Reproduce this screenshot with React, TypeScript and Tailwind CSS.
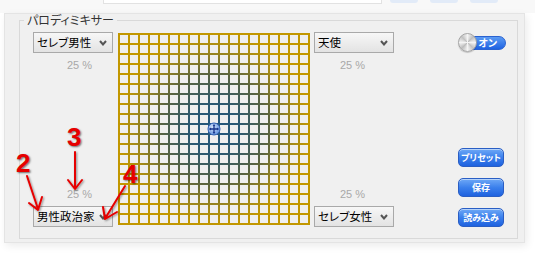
import React from "react";

const jp = "font-['Noto_Sans_CJK_JP',sans-serif] [font-feature-settings:'palt']";

const Chevron = () => (
  <svg width="8" height="6" viewBox="0 0 8 6">
    <path d="M1 1 L4 4.5 L7 1" fill="none" stroke="#555" strokeWidth="2" />
  </svg>
);

const Select = ({ label }: { label: string }) => (
  <div className={`flex h-[21px] w-[80px] items-center justify-between whitespace-nowrap border border-[#a9a9a9] bg-gradient-to-b from-[#f7f7f7] to-[#e3e3e3] pl-[3px] pr-[5px] text-[11.5px] leading-none text-black ${jp}`}>
    <span>{label}</span>
    <Chevron />
  </div>
);

const Pct = ({ className }: { className: string }) => (
  <div className={`font-['Liberation_Sans',sans-serif] text-[11px] leading-[13px] text-[#a8a8a8] ${className}`}>25 %</div>
);

const BlueButton = ({ label }: { label: string }) => (
  <button className={`flex h-[19px] w-[46px] items-center justify-center whitespace-nowrap rounded-[5px] border border-[#2a5ec4] bg-gradient-to-b from-[#6ea8f6] via-[#3b80ec] to-[#1f62df] px-0 text-[9px] font-bold leading-none text-white shadow-[inset_0_1px_0_rgba(255,255,255,0.5)] ${jp}`}>
    {label}
  </button>
);

const Handle = () => (
  <svg width="14" height="14" viewBox="0 0 14 14">
    <defs>
      <radialGradient id="hg" cx="0.4" cy="0.35" r="0.7">
        <stop offset="0" stopColor="#d4e4fb" />
        <stop offset="1" stopColor="#5d8fdc" />
      </radialGradient>
    </defs>
    <circle cx="7" cy="7" r="6" fill="url(#hg)" stroke="#3463b8" strokeWidth="1" />
    <path d="M7 2.5 V11.5 M2.5 7 H11.5" stroke="#17348a" strokeWidth="1.3" />
    <path d="M5.6 4 L7 2.4 L8.4 4 Z M5.6 10 L7 11.6 L8.4 10 Z M4 5.6 L2.4 7 L4 8.4 Z M10 5.6 L11.6 7 L10 8.4 Z" fill="#17348a" />
  </svg>
);

export default function App() {
  const cells = Array.from({ length: 19 * 19 });
  return (
    <div className="relative h-[254px] w-[535px] overflow-hidden bg-white">
      {/* top strip */}
      <div className="flex h-[13px] bg-[#f8f8f8]">
        <div className="ml-[103px] h-[4px] w-[279px] border-x border-b border-[#e2e2e2] bg-white" />
        <div className="ml-[8px] h-[3px] w-[28px] rounded-b-[3px] bg-[#e2ebf8]" />
        <div className="ml-[12px] h-[3px] w-[28px] rounded-b-[3px] bg-[#e2ebf8]" />
        <div className="ml-[12px] h-[3px] w-[28px] rounded-b-[3px] bg-[#e2ebf8]" />
      </div>

      {/* panel */}
      <div className="ml-[4px] h-[230px] w-[521px] border border-[#e4e4e4] bg-[#f0f0f0] pl-[14px] shadow-[2px_3px_8px_rgba(0,0,0,0.08)]">
        <fieldset className="h-[225px] w-[499px] border border-[#d9d9d9]">
          <legend className={`ml-[4px] px-[3px] text-[12px] leading-[12px] text-[#333] ${jp}`}>パロディミキサー</legend>
          <div className="flex pl-[13px] pt-[6px]">
            {/* left column */}
            <div className="flex h-[195px] w-[80px] flex-col justify-between">
              <div>
                <Select label="セレブ男性" />
                <Pct className="mt-[6px] pl-[34px]" />
              </div>
              <div>
                <Pct className="mb-[5px] pl-[34px]" />
                <Select label="男性政治家" />
              </div>
            </div>

            {/* mixer grid */}
            <div className="relative ml-[5px] mt-[1px]">
              <div className="grid grid-cols-[repeat(19,8px)] gap-[2px] bg-[radial-gradient(circle_at_center,#22567e_0px,#2b5872_25px,#5a633f_55px,#a48a18_80px,#c29700_96px)] p-[2px]">
                {cells.map((_, i) => (
                  <div key={i} className="h-[8px] w-[8px] bg-[#efefef]" />
                ))}
              </div>
              <div className="absolute left-[89px] top-[89px]">
                <Handle />
              </div>
            </div>

            {/* right column */}
            <div className="ml-[4px] flex h-[195px] w-[80px] flex-col justify-between">
              <div>
                <Select label="天使" />
                <Pct className="mt-[6px] pl-[26px]" />
              </div>
              <div>
                <Pct className="mb-[5px] pl-[26px]" />
                <Select label="セレブ女性" />
              </div>
            </div>

            {/* controls */}
            <div className="ml-[64px] flex h-[195px] w-[48px] flex-col justify-between">
              <div className="relative mt-[1px] h-[20px] w-[48px]">
                <div className="absolute left-[8px] top-[3px] flex h-[14px] w-[40px] items-center justify-end rounded-full border border-[#2a62d0] bg-gradient-to-b from-[#5b9af3] to-[#1f62e2] pr-[8px]">
                  <span className={`whitespace-nowrap text-[10px] font-bold leading-none text-white ${jp}`}>オン</span>
                </div>
                <div className="absolute left-0 top-0 h-[19px] w-[19px] rounded-full border border-[#a5a5a5] bg-[conic-gradient(from_0deg,#f4f4f4,#bdbdbd,#f4f4f4,#c2c2c2,#f4f4f4,#bdbdbd,#f4f4f4,#c2c2c2,#f4f4f4)] shadow-[0_1px_1px_rgba(0,0,0,0.2)]" />
              </div>
              <div className="flex flex-col gap-[11px]">
                <BlueButton label="プリセット" />
                <BlueButton label="保存" />
                <BlueButton label="読み込み" />
              </div>
            </div>
          </div>
        </fieldset>
      </div>

      {/* annotations */}
      <div className="pointer-events-none absolute inset-0">
        <svg width="535" height="254" className="absolute left-0 top-0">
          <defs>
            <filter id="sh" x="-20%" y="-20%" width="140%" height="140%">
              <feDropShadow dx="1" dy="1" stdDeviation="0.8" floodColor="#000" floodOpacity="0.45" />
            </filter>
          </defs>
          <g stroke="#e60000" strokeWidth="2" fill="none" strokeLinecap="round" strokeLinejoin="round" filter="url(#sh)">
            <path d="M27 176 L38 209 M29 203 L38 210 L42 197" />
            <path d="M75 152 L75 188 M68 180 L75 189 L82 180" />
            <path d="M125 186 L106 217 M103 207 L105 219 L117 212" />
          </g>
        </svg>
        {[
          { n: "2", c: "left-[16px] top-[150px]" },
          { n: "3", c: "left-[67px] top-[124px]" },
          { n: "4", c: "left-[123px] top-[161px]" },
        ].map((d) => (
          <div
            key={d.n}
            className={`absolute ${d.c} font-['Liberation_Sans',sans-serif] text-[26px] font-bold leading-[26px] text-[#e60000] [text-shadow:1px_1px_2px_rgba(0,0,0,0.55)]`}
          >
            {d.n}
          </div>
        ))}
      </div>
    </div>
  );
}
